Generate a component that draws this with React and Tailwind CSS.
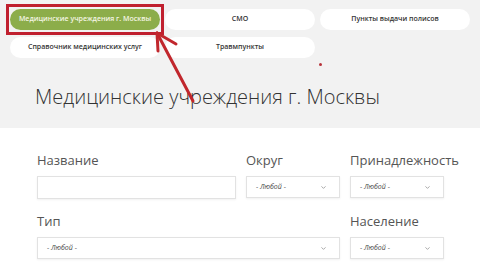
import { ChevronDown } from "lucide-react";

const tabs = [
    { label: "Медицинские учреждения г. Москвы", active: true },
    { label: "СМО" },
    { label: "Пункты выдачи полисов" },
    { label: "Справочник медицинских услуг" },
    { label: "Травмпункты" },
];

function Select({ className = "" }) {
    return (
        <div
            className={`flex h-[22px] items-center justify-between border border-[#e2e2e2] bg-white pl-[9px] pr-[12px] shadow-[0_1px_2px_rgba(0,0,0,0.06)] ${className}`}
        >
            <span className="text-[7px] italic text-[#444]">- Любой -</span>
            <ChevronDown size={7} strokeWidth={2.5} className="text-[#888]" />
        </div>
    );
}

function Field({ label, children, className = "" }) {
    return (
        <div className={`flex flex-col ${className}`}>
            <span className="mb-[7px] text-[13px] leading-[18px] text-[#555]">{label}</span>
            {children}
        </div>
    );
}

export default function App() {
    return (
        <div className="relative h-[268px] w-[480px] overflow-hidden bg-white font-['Open_Sans',sans-serif]">
            <div className="h-[128px] bg-[#f2f2f2]">
                <div className="grid grid-cols-3 gap-x-[5px] gap-y-[7px] px-[10px] pt-[9px]">
                    {tabs.map((tab) =>
                        tab.active ? (
                            <div key={tab.label} className="relative">
                                <div className="absolute -inset-x-[4px] -bottom-[5px] -top-[5px] border-[3px] border-[#c0202f]" />
                                <div className="flex h-[21px] items-center justify-center rounded-full bg-[#8cad4a] text-[7px] font-semibold text-[#f4f6e4]">
                                    {tab.label}
                                </div>
                            </div>
                        ) : (
                            <div
                                key={tab.label}
                                className="flex h-[21px] items-center justify-center rounded-full bg-white text-[7px] font-semibold text-[#333]"
                            >
                                {tab.label}
                            </div>
                        )
                    )}
                </div>
                <div className="ml-[319px] mt-[5px] h-[3px] w-[3px] rounded-full bg-[#b7323a]" />
                <h1 className="ml-[35px] mt-[17px] text-[20px] font-light leading-[28px] text-[#333]">
                    Медицинские учреждения г. Москвы
                </h1>
            </div>

            <div className="grid grid-cols-[199px_94px_94px] gap-x-[10px] gap-y-[13px] px-[37px] pt-[23px]">
                <Field label="Название">
                    <div className="h-[23px] border border-[#e2e2e2] bg-white shadow-[0_1px_2px_rgba(0,0,0,0.06)]" />
                </Field>
                <Field label="Округ">
                    <Select />
                </Field>
                <Field label="Принадлежность">
                    <Select />
                </Field>
                <Field label="Тип" className="col-span-2">
                    <Select />
                </Field>
                <Field label="Население">
                    <Select />
                </Field>
            </div>

            <svg className="absolute left-0 top-0" width="480" height="268" viewBox="0 0 480 268">
                <g stroke="#c1272d" strokeWidth="3" strokeLinecap="round" fill="none">
                    <line x1="157" y1="33" x2="193" y2="101" />
                    <line x1="157" y1="33" x2="176" y2="44" />
                    <line x1="157" y1="33" x2="158" y2="51" />
                </g>
            </svg>
        </div>
    );
}
